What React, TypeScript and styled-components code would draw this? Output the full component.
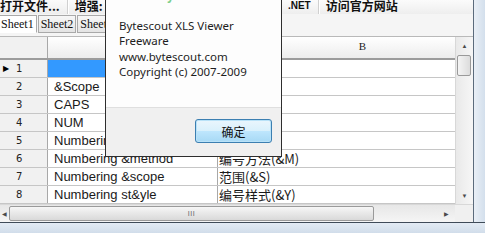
import React from "react";
import styled, { createGlobalStyle } from "styled-components";

const Global = createGlobalStyle`
  html, body { margin: 0; padding: 0; overflow: hidden; background: #dbe5f0; }
  #root { width: 485px; height: 233px; }
`;

const Window = styled.div`
  position: relative;
  width: 485px;
  height: 233px;
  overflow: hidden;
  display: grid;
  grid-template-columns: 473px 12px;
  grid-template-rows: 222px 11px;
  background: #dbe5f0;
`;

const Main = styled.div`
  display: flex;
  flex-direction: column;
  background: #f3f3f3;
  overflow: hidden;
`;

const RightFrame = styled.div`
  border-left: 1px solid #5b6b7c;
  background: linear-gradient(90deg, #e9eff6, #d3dfec);
`;

const BottomFrame = styled.div`
  grid-column: 1 / span 2;
  border-top: 1px solid #3f4b58;
  background: linear-gradient(180deg, #e3ebf4, #d1ddea);
`;

const Toolbar = styled.div`
  height: 14px;
  display: flex;
  align-items: flex-start;
  background: linear-gradient(180deg, #fbfbfb, #eeeeee);
  font-family: "Noto Sans CJK SC", "Liberation Sans", sans-serif;
  font-weight: 700;
  font-size: 12px;
  line-height: 12px;
  color: #111;
  overflow: hidden;
`;

const ToolItem = styled.div<{ $w?: number }>`
  display: flex;
  justify-content: space-between;
  white-space: nowrap;
  width: ${(p) => (p.$w ? `${p.$w}px` : "auto")};
`;

const Latin = styled.span`
  font-family: "Liberation Sans", sans-serif;
  font-size: 10px;
`;

const ToolSep = styled.div`
  width: 1px;
  height: 14px;
  margin: 0 7px;
  background: #d0d0d0;
  box-shadow: 1px 0 0 #ffffff;
`;

const TabStrip = styled.div`
  height: 22px;
  display: flex;
  align-items: flex-start;
  padding-top: 1px;
  box-sizing: border-box;
  background: #f5f5f5;
  gap: 1px;
`;

const Tab = styled.div<{ $active?: boolean }>`
  height: 18px;
  box-sizing: border-box;
  padding: 0 2px;
  border: 1px solid #a9a9a9;
  border-bottom-color: ${(p) => (p.$active ? "#ffffff" : "#a9a9a9")};
  background: ${(p) => (p.$active ? "#ffffff" : "linear-gradient(180deg,#f7f7f7,#e4e4e4)")};
  font-family: "Liberation Serif", serif;
  font-size: 12px;
  line-height: 16px;
  color: #111;
  white-space: nowrap;
  margin-left: ${(p) => (p.$active ? "-2px" : "0")};
`;

const Grid = styled.div`
  display: flex;
  flex-direction: column;
  background: #ffffff;
  border-top: 1px solid #b9b9b9;
`;

const GridBody = styled.div`
  display: flex;
  height: 167px;
`;

const Table = styled.div`
  width: 455px;
  overflow: hidden;
  display: flex;
  flex-direction: column;
`;

const Row = styled.div<{ $header?: boolean }>`
  display: flex;
  flex: none;
  height: ${(p) => (p.$header ? "23px" : "18px")};
  box-sizing: border-box;
  border-bottom: ${(p) => (p.$header ? "2px solid #9c9c9c" : "1px solid #c6c6c6")};
  background: ${(p) => (p.$header ? "linear-gradient(180deg,#ffffff,#ededed)" : "#ffffff")};
`;

const RowHead = styled.div`
  flex: none;
  width: 48px;
  box-sizing: border-box;
  position: relative;
  border-right: 1px solid #a8a8a8;
  background: #f1f1f1;
  font-family: "DejaVu Sans", sans-serif;
  font-size: 10px;
  line-height: 17px;
  padding-left: 16px;
  color: #222;
`;

const Pointer = styled.span`
  position: absolute;
  left: 3px;
  top: 0;
  font-size: 8px;
  color: #000;
`;

const Cell = styled.div<{ $w: number; $sel?: boolean; $cjk?: boolean }>`
  flex: none;
  width: ${(p) => p.$w}px;
  box-sizing: border-box;
  border-right: 1px solid #a8a8a8;
  background: ${(p) => (p.$sel ? "#3399ff" : "transparent")};
  padding-left: ${(p) => (p.$cjk ? 1 : 6)}px;
  font-family: ${(p) =>
    p.$cjk ? '"Noto Sans CJK SC", sans-serif' : '"Liberation Sans", Arial, sans-serif'};
  font-size: 13px;
  line-height: 17px;
  color: #1a1a1a;
  white-space: nowrap;
  overflow: hidden;
`;

const HeadCell = styled.div<{ $w: number }>`
  flex: none;
  width: ${(p) => p.$w}px;
  box-sizing: border-box;
  border-right: 1px solid #d2d2d2;
  text-align: center;
  font-family: "Liberation Serif", serif;
  font-size: 11px;
  line-height: 19px;
  color: #222;
`;

const VScroll = styled.div`
  width: 18px;
  box-sizing: border-box;
  border-left: 1px solid #d8d8d8;
  display: flex;
  flex-direction: column;
  background: linear-gradient(90deg, #e9e9e9, #f6f6f6);
`;

const ArrowBtn = styled.div<{ $w?: number }>`
  flex: none;
  width: ${(p) => (p.$w ? `${p.$w}px` : "auto")};
  height: 17px;
  display: flex;
  align-items: center;
  justify-content: center;
  font-size: 6px;
  color: #4a4a4a;
`;

const Track = styled.div`
  flex: 1;
  display: flex;
  flex-direction: column;
  padding: 1px 2px 0 1px;
`;

const Thumb = styled.div`
  height: 21px;
  box-sizing: border-box;
  border: 1px solid #9a9a9a;
  border-radius: 2px;
  background: linear-gradient(90deg, #f4f4f4, #dcdcdc);
`;

const HScrollRow = styled.div`
  display: flex;
  height: 18px;
  box-sizing: border-box;
  border-top: 1px solid #d8d8d8;
  background: linear-gradient(180deg, #e7e7e7, #f5f5f5);
`;

const HScroll = styled.div`
  width: 455px;
  display: flex;
  align-items: center;
`;

const HTrack = styled.div`
  flex: 1;
  height: 100%;
  display: flex;
  align-items: center;
`;

const HThumb = styled.div`
  width: 365px;
  height: 15px;
  box-sizing: border-box;
  border: 1px solid #9a9a9a;
  border-radius: 2px;
  background: linear-gradient(180deg, #f6f6f6, #d9d9d9);
  display: flex;
  align-items: center;
  justify-content: center;
  font-family: "Liberation Sans", sans-serif;
  font-size: 7px;
  letter-spacing: 0.5px;
  color: #666;
`;

const Corner = styled.div`
  width: 18px;
  background: #f0f0f0;
`;

const Dialog = styled.div`
  position: absolute;
  left: 105px;
  top: -16px;
  width: 177px;
  height: 173px;
  box-sizing: border-box;
  border: 1px solid #2e2e2e;
  display: flex;
  flex-direction: column;
  background: #fdfdfd;
`;

const DialogBody = styled.div`
  flex: none;
  height: 122px;
  padding: 4px 0 0 13px;
  box-sizing: border-box;
  font-family: "Noto Sans", "Open Sans", sans-serif;
  font-size: 11.5px;
  line-height: 15.3px;
  color: #1e1e1e;
`;

const GreenLine = styled.div`
  color: #7fcf8c;
  font-weight: 700;
  height: 13px;
  line-height: 13px;
  margin-bottom: 16px;
  padding-left: 4px;
  letter-spacing: 1px;
`;

const TextLine = styled.div`
  white-space: nowrap;
`;

const DialogFoot = styled.div`
  flex: 1;
  border-top: 1px solid #dfdfdf;
  background: #f0f0f0;
  display: flex;
  justify-content: flex-end;
  align-items: flex-start;
  padding: 11px 9px 0 0;
`;

const Button = styled.div`
  width: 77px;
  height: 24px;
  box-sizing: border-box;
  border: 1px solid #3c7fb1;
  border-radius: 3px;
  box-shadow: inset 0 0 0 1px #b9e2f8;
  background: linear-gradient(180deg, #eaf6fd 0%, #d9f0fc 50%, #bee6fd 51%, #a7d9f5 100%);
  display: flex;
  align-items: center;
  justify-content: center;
  font-family: "Noto Sans CJK SC", sans-serif;
  font-size: 12px;
  color: #111;
`;

const rows: { a: string; b: string }[] = [
  { a: "", b: "" },
  { a: "&Scope", b: "" },
  { a: "CAPS", b: "" },
  { a: "NUM", b: "" },
  { a: "Numbering", b: "" },
  { a: "Numbering &method", b: "编号方法(&M)" },
  { a: "Numbering &scope", b: "范围(&S)" },
  { a: "Numbering st&yle", b: "编号样式(&Y)" },
];

export default function App() {
  return (
    <>
      <Global />
      <Window>
        <Main>
          <Toolbar>
            <ToolItem>打开文件...</ToolItem>
            <ToolSep />
            <ToolItem $w={236}>
              <span>增强: 查看器</span>
              <Latin>.NET</Latin>
            </ToolItem>
            <ToolSep />
            <ToolItem>访问官方网站</ToolItem>
          </Toolbar>
          <TabStrip>
            <Tab $active>Sheet1</Tab>
            <Tab>Sheet2</Tab>
            <Tab>Sheet3</Tab>
          </TabStrip>
          <Grid>
            <GridBody>
              <Table>
                <Row $header>
                  <RowHead />
                  <HeadCell $w={170}>A</HeadCell>
                  <HeadCell $w={290}>B</HeadCell>
                </Row>
                {rows.map((r, i) => (
                  <Row key={i}>
                    <RowHead>
                      {i === 0 && <Pointer>▶</Pointer>}
                      {i + 1}
                    </RowHead>
                    <Cell $w={170} $sel={i === 0}>
                      {r.a}
                    </Cell>
                    <Cell $w={290} $cjk>
                      {r.b}
                    </Cell>
                  </Row>
                ))}
              </Table>
              <VScroll>
                <ArrowBtn>▲</ArrowBtn>
                <Track>
                  <Thumb />
                </Track>
                <ArrowBtn>▼</ArrowBtn>
              </VScroll>
            </GridBody>
            <HScrollRow>
              <HScroll>
                <ArrowBtn $w={9}>◀</ArrowBtn>
                <HTrack>
                  <HThumb>III</HThumb>
                </HTrack>
                <ArrowBtn $w={17}>▶</ArrowBtn>
              </HScroll>
              <Corner />
            </HScrollRow>
          </Grid>
        </Main>
        <RightFrame />
        <BottomFrame />
        <Dialog>
          <DialogBody>
            <GreenLine>www.bytescout.com</GreenLine>
            <TextLine>Bytescout XLS Viewer</TextLine>
            <TextLine>Freeware</TextLine>
            <TextLine>www.bytescout.com</TextLine>
            <TextLine>Copyright (c) 2007-2009</TextLine>
          </DialogBody>
          <DialogFoot>
            <Button>确定</Button>
          </DialogFoot>
        </Dialog>
      </Window>
    </>
  );
}
